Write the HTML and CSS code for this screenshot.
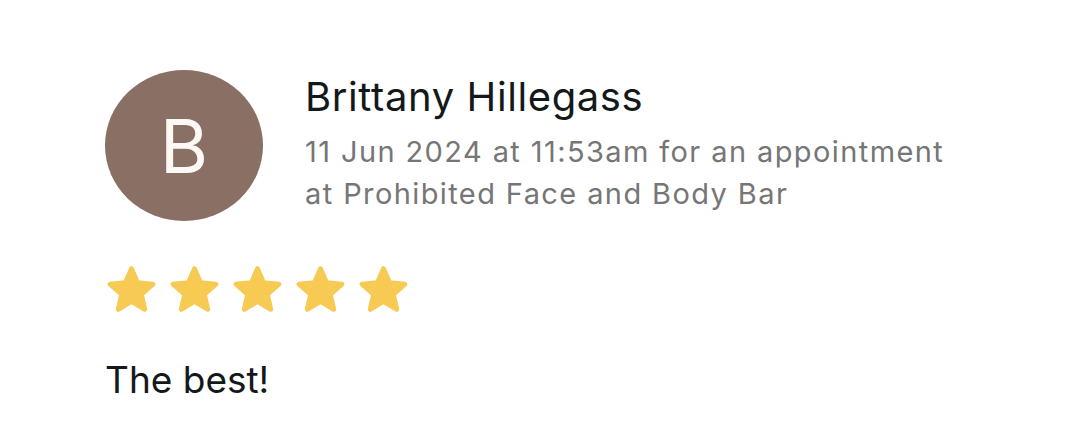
FILE: index.html
```html
<!DOCTYPE html>
<html>
<head>
<meta charset="utf-8">
<link rel="stylesheet" href="styles.css">
</head>
<body>
<div class="review">
  <div class="header">
    <div class="avatar">B</div>
    <div class="meta">
      <div class="name">Brittany Hillegass</div>
      <div class="sub">11 Jun 2024 at 11:53am for an appointment<br>at Prohibited Face and Body Bar</div>
    </div>
  </div>
  <div class="stars">
    <svg class="star" viewBox="0 0 50 47"><polygon points="25,2.7 31.22,17.14 46.87,18.59 35.06,28.97 38.52,44.31 25,36.28 11.48,44.31 14.94,28.97 3.13,18.59 18.78,17.14"/></svg>
    <svg class="star" viewBox="0 0 50 47"><polygon points="25,2.7 31.22,17.14 46.87,18.59 35.06,28.97 38.52,44.31 25,36.28 11.48,44.31 14.94,28.97 3.13,18.59 18.78,17.14"/></svg>
    <svg class="star" viewBox="0 0 50 47"><polygon points="25,2.7 31.22,17.14 46.87,18.59 35.06,28.97 38.52,44.31 25,36.28 11.48,44.31 14.94,28.97 3.13,18.59 18.78,17.14"/></svg>
    <svg class="star" viewBox="0 0 50 47"><polygon points="25,2.7 31.22,17.14 46.87,18.59 35.06,28.97 38.52,44.31 25,36.28 11.48,44.31 14.94,28.97 3.13,18.59 18.78,17.14"/></svg>
    <svg class="star" viewBox="0 0 50 47"><polygon points="25,2.7 31.22,17.14 46.87,18.59 35.06,28.97 38.52,44.31 25,36.28 11.48,44.31 14.94,28.97 3.13,18.59 18.78,17.14"/></svg>
  </div>
  <p class="text">The best!</p>
</div>
</body>
</html>
```

FILE: styles.css
```css
html, body {
  margin: 0;
  padding: 0;
  background: #ffffff;
}
body {
  font-family: Inter, "Noto Sans", sans-serif;
  width: 1080px;
  height: 441px;
  overflow: hidden;
}
.review {
  padding: 70px 0 0 105px;
}
.header {
  display: flex;
  align-items: flex-start;
  gap: 42px;
}
.avatar {
  width: 158px;
  height: 151px;
  border-radius: 50%;
  background: #8a6f64;
  color: #fcf8f6;
  font-size: 74px;
  line-height: 1;
  display: flex;
  align-items: center;
  justify-content: center;
  flex-shrink: 0;
}
.meta {
  padding-top: 3px;
}
.name {
  font-size: 40px;
  line-height: 48px;
  color: #14181b;
  letter-spacing: 0.6px;
}
.sub {
  font-size: 29px;
  line-height: 42px;
  color: #767676;
  letter-spacing: 1.4px;
  margin-top: 10px;
}
.stars {
  display: flex;
  gap: 14px;
  margin-top: 45px;
  padding-left: 2px;
}
.star {
  width: 49px;
  height: 46px;
  display: block;
}
.star polygon {
  fill: #f7ca53;
  stroke: #f7ca53;
  stroke-width: 5;
  stroke-linejoin: round;
}
.text {
  margin: 46px 0 0 0;
  font-size: 37px;
  line-height: 44px;
  color: #14181b;
}
```
